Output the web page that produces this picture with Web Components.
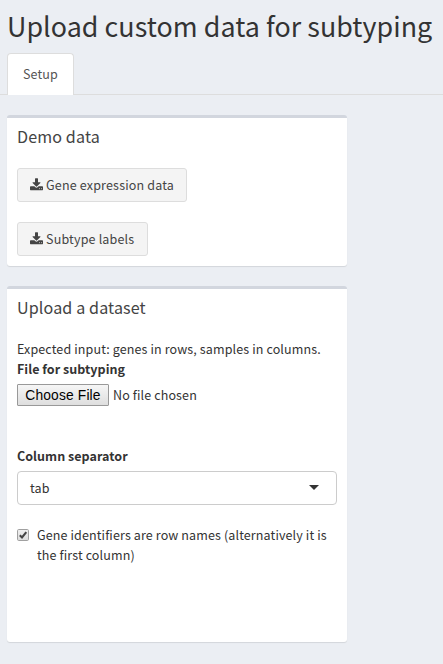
<!DOCTYPE html>
<html lang="en">
<head>
<meta charset="utf-8">
<title>Upload custom data for subtyping</title>
<style>
html, body { margin: 0; height: 100%; background: #ebeef3; }
body { font: 12.53px/20px "Noto Sans CJK SC", "Open Sans", sans-serif; letter-spacing: .12px; color: #333; overflow: hidden; }
</style>
</head>
<body>
<upload-page></upload-page>
<script>
const define = (name, html) => customElements.define(name, class extends HTMLElement {
  connectedCallback() {
    if (this.shadowRoot) return;
    this.attachShadow({ mode: "open" }).innerHTML = html;
  }
});

define("page-title", `<style>
:host { display: block; height: 53px; padding-left: 7px; }
h1 { margin: 0; font-size: 26.85px; font-weight: 400; line-height: 52px; white-space: nowrap; letter-spacing: .05px; }
</style><h1><slot></slot></h1>`);

define("tab-bar", `<style>
:host { display: flex; box-sizing: border-box; height: 42px; padding-left: 7px; border-bottom: 1px solid #ddd; margin-bottom: 20px; }
</style><slot></slot>`);

define("tab-item", `<style>
:host { display: block; box-sizing: border-box; width: 67px; height: 42px; padding: 10px 0 0 15px; border: 1px solid #ddd; border-bottom: 0; border-radius: 4px 4px 0 0; background: #fff; color: #555; white-space: nowrap; }
</style><slot></slot>`);

define("box-card", `<style>
:host { display: block; box-sizing: border-box; width: 340px; margin: 0 0 20px 7px; border-top: 3px solid #d2d6de; border-radius: 3px; background: #fff; box-shadow: 0 1px 1px rgba(0,0,0,.1); }
header { height: 38px; padding: 0 10px; font-size: 16.1px; line-height: 37px; color: #444; }
section { padding: 12px 10px 10px; display: flex; flex-direction: column; align-items: flex-start; }
</style><header><slot name="title"></slot></header><section><slot></slot></section>`);

define("download-button", `<style>
:host { display: block; }
:host(:not(:last-of-type)) { margin-bottom: 20px; }
button { display: flex; align-items: center; box-sizing: border-box; width: var(--w); height: 34px; margin: 0; padding: 0 0 0 12px; border: 1px solid #ddd; border-radius: 3px; background: #f4f4f4; color: #444; font: inherit; letter-spacing: .17px; white-space: nowrap; }
svg { width: 13px; height: 13px; margin: -2px 3px 0 0; flex: none; }
</style><button type="button"><svg viewBox="0 0 1664 1600" fill="#444"><path d="M1280 1344q0-26-19-45t-45-19-45 19-19 45 19 45 45 19 45-19 19-45zm256 0q0-26-19-45t-45-19-45 19-19 45 19 45 45 19 45-19 19-45zm128-224v320q0 40-28 68t-68 28h-1472q-40 0-68-28t-28-68v-320q0-40 28-68t68-28h465l135 136q58 56 136 56t136-56l136-136h464q40 0 68 28t28 68zm-325-569q17 41-14 70l-448 448q-18 19-45 19t-45-19l-448-448q-31-29-14-70 17-39 59-39h256v-448q0-26 19-45t45-19h256q26 0 45 19t19 45v448h256q42 0 59 39z"/></svg><span><slot></slot></span></button>`);

define("field-label", `<style>
:host { display: block; font-weight: 700; letter-spacing: .03px; white-space: nowrap; }
</style><slot></slot>`);

define("file-picker", `<style>
:host { display: flex; align-items: center; height: 22px; margin: 5px 0 40px; white-space: nowrap; }
button { box-sizing: border-box; width: 92px; height: 22px; margin: 0 4px 0 0; padding: 0; border: 1px solid #999; border-radius: 1px; background: linear-gradient(#f6f6f6, #dedede); color: #000; font: 13.8px/19px "Liberation Sans", Arial, sans-serif; letter-spacing: .15px; }
span { margin-top: -1px; }
</style><button type="button">Choose File</button><span>No file chosen</span>`);

define("select-field", `<style>
:host { display: flex; align-items: center; justify-content: space-between; box-sizing: border-box; width: 320px; height: 34px; margin: 5px 0 20px; padding: 0 17px 0 12px; border: 1px solid #ccc; border-radius: 4px; }
i { border: 5px solid transparent; border-top-color: #333; border-bottom: 0; margin-top: -2px; }
</style><span><slot></slot></span><i></i>`);

define("check-field", `<style>
:host { display: flex; width: 320px; height: 107px; }
svg { flex: none; width: 12px; height: 12px; margin: 4px 8px 0 0; }
span { white-space: nowrap; }
</style><svg viewBox="0 0 12 12"><defs><linearGradient id="g" x2="0" y2="1"><stop stop-color="#f0f0f0"/><stop offset="1" stop-color="#dcdcdc"/></linearGradient></defs><rect x=".5" y=".5" width="11" height="11" rx="1.2" fill="url(#g)" stroke="#a0a0a0"/><path d="M2.8 6.2 5 8.4 9.3 3.1" fill="none" stroke="#444" stroke-width="2.1"/></svg><span><slot></slot></span>`);

define("upload-page", `<style>
:host { display: block; }
p { margin: 0; white-space: nowrap; }
</style>
<page-title>Upload custom data for subtyping</page-title>
<tab-bar><tab-item>Setup</tab-item></tab-bar>
<box-card><span slot="title">Demo data</span>
<download-button style="--w:170px">Gene expression data</download-button>
<download-button style="--w:131px">Subtype labels</download-button>
</box-card>
<box-card><span slot="title">Upload a dataset</span>
<p>Expected input: genes in rows, samples in columns.</p>
<field-label>File for subtyping</field-label>
<file-picker></file-picker>
<field-label>Column separator</field-label>
<select-field>tab</select-field>
<check-field>Gene identifiers are row names (alternatively it is<br>the first column)</check-field>
</box-card>`);
</script>
</body>
</html>
